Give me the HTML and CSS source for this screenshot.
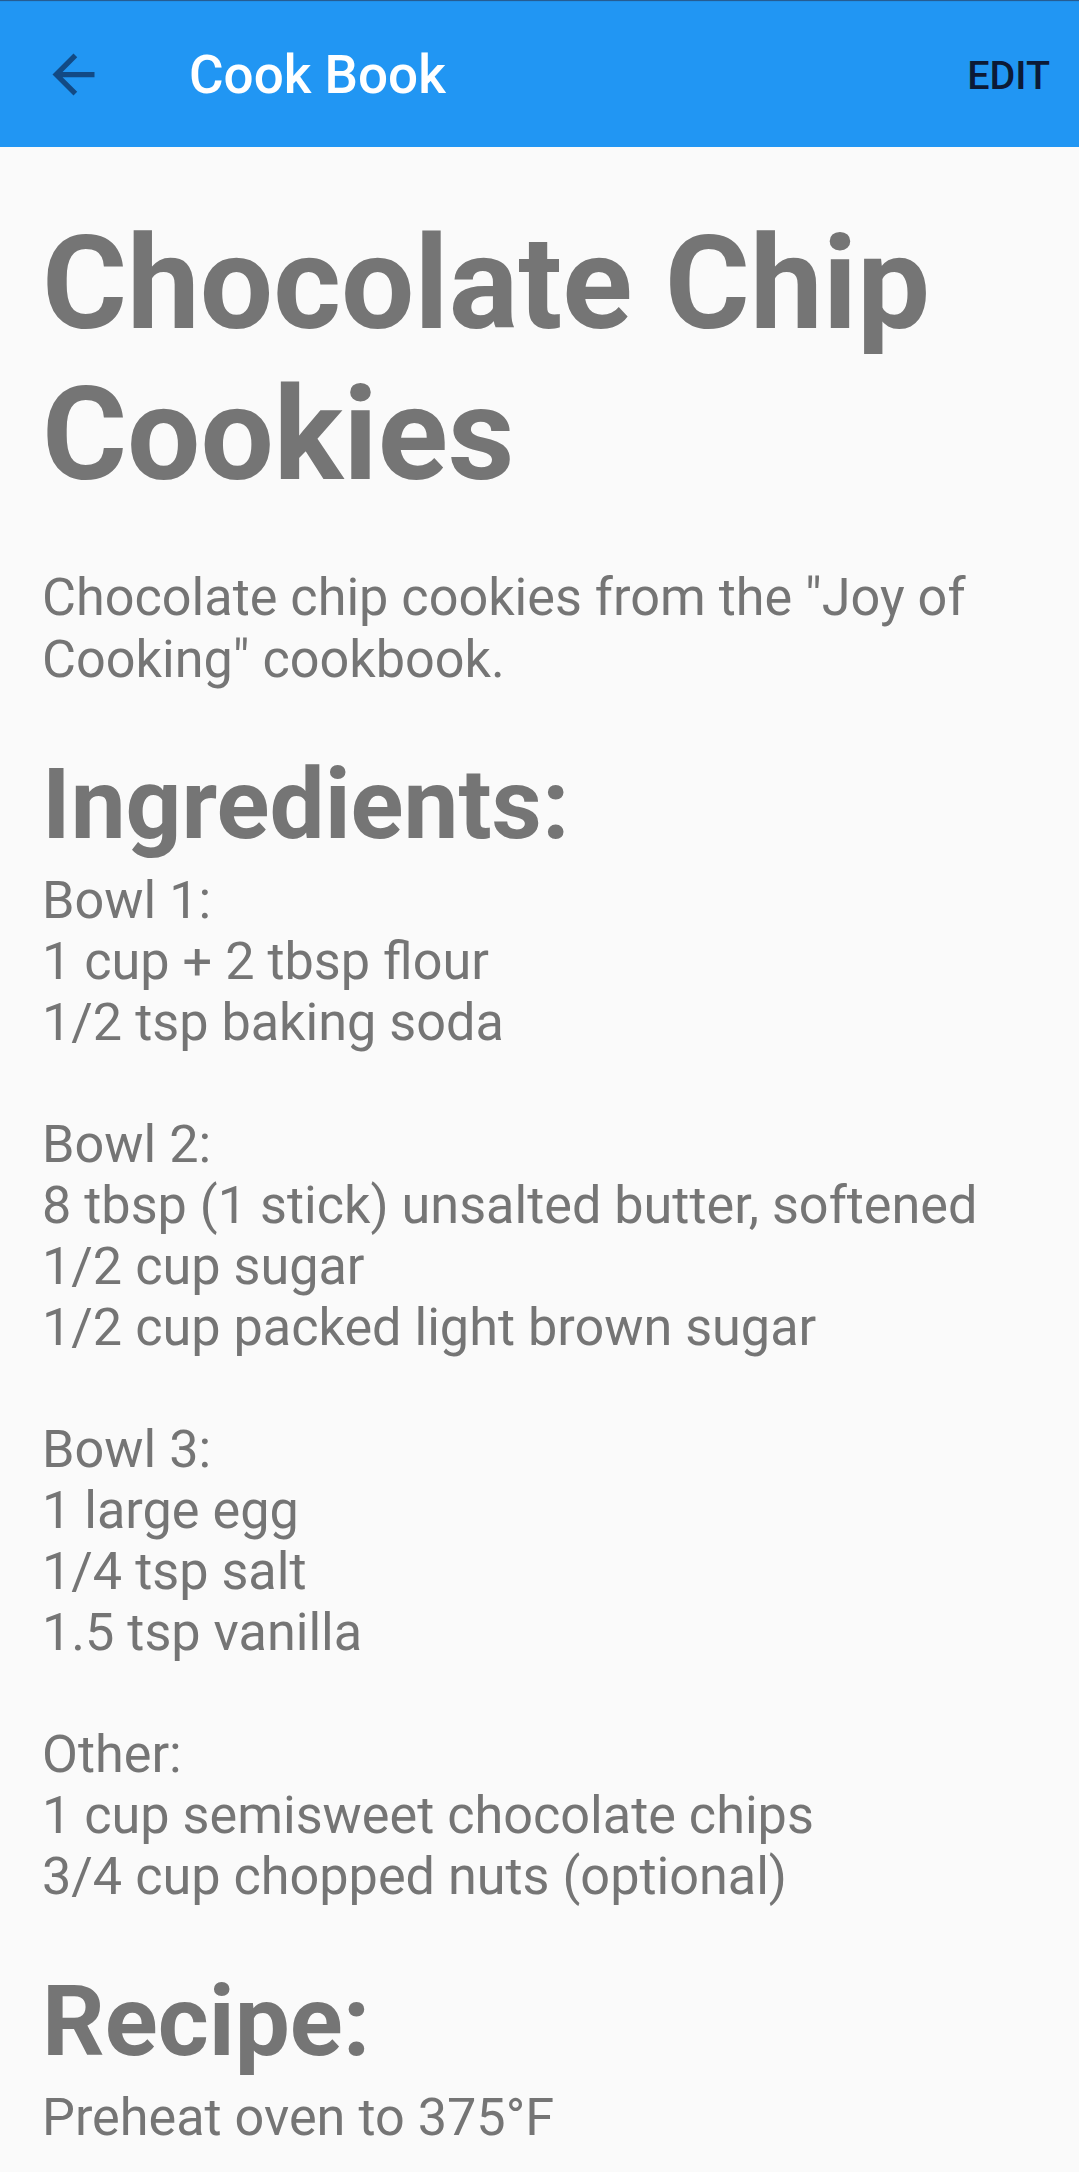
FILE: index.html
```html
<!DOCTYPE html>
<html lang="en">
<head>
<meta charset="utf-8">
<title>Cook Book</title>
<link rel="stylesheet" href="styles.css">
</head>
<body>
<header class="appbar">
  <div class="back">
    <svg viewBox="0 0 24 24" width="63" height="63" aria-hidden="true"><path d="M20 11H7.83l5.59-5.59L12 4l-8 8 8 8 1.41-1.41L7.83 13H20v-2z"/></svg>
  </div>
  <div class="bar-title">Cook Book</div>
  <div class="edit">EDIT</div>
</header>
<main class="content">
  <h1 class="title">Chocolate Chip Cookies</h1>
  <p class="desc">Chocolate chip cookies from the "Joy of Cooking" cookbook.</p>
  <h2 class="heading">Ingredients:</h2>
  <div class="list">
    <div>Bowl 1:</div>
    <div>1 cup + 2 tbsp flour</div>
    <div>1/2 tsp baking soda</div>
    <div class="blank">&nbsp;</div>
    <div>Bowl 2:</div>
    <div>8 tbsp (1 stick) unsalted butter, softened</div>
    <div>1/2 cup sugar</div>
    <div>1/2 cup packed light brown sugar</div>
    <div class="blank">&nbsp;</div>
    <div>Bowl 3:</div>
    <div>1 large egg</div>
    <div>1/4 tsp salt</div>
    <div>1.5 tsp vanilla</div>
    <div class="blank">&nbsp;</div>
    <div>Other:</div>
    <div>1 cup semisweet chocolate chips</div>
    <div>3/4 cup chopped nuts (optional)</div>
  </div>
  <h2 class="heading">Recipe:</h2>
  <div class="list">
    <div>Preheat oven to 375°F</div>
  </div>
</main>
</body>
</html>
```
FILE: styles.css
```css
html, body {
  margin: 0;
  padding: 0;
}
body {
  background: #fafafa;
  font-family: Roboto, "Liberation Sans", sans-serif;
  width: 1079px;
  height: 2172px;
  overflow: hidden;
}
.appbar {
  height: 147px;
  background: #2196f3;
  display: flex;
  align-items: center;
  box-shadow: inset 0 2px 1px -1px rgba(40, 60, 90, 0.7);
}
.back {
  width: 63px;
  height: 63px;
  margin-left: 42px;
  margin-top: 1px;
}
.back svg {
  display: block;
  fill: #124a85;
}
.bar-title {
  margin-left: 84px;
  color: #ffffff;
  font-size: 53px;
  font-weight: 500;
  line-height: 1;
  margin-top: 4px;
  flex: 1;
}
.edit {
  margin-right: 29px;
  color: #0c1a36;
  font-size: 39.5px;
  font-weight: 500;
  line-height: 1;
  margin-top: 4px;
}
.content {
  padding: 0 42px;
  color: #757575;
}
.title {
  margin: 61px 0 0;
  font-size: 130px;
  font-weight: 700;
  line-height: 151px;
}
.desc {
  margin: 57px 0 0;
  font-size: 52.2px;
  font-weight: 400;
  line-height: 61.5px;
}
.heading {
  margin: 57px 0 8px;
  font-size: 98px;
  font-weight: 700;
  line-height: 115px;
}
.list {
  font-size: 52.2px;
  font-weight: 400;
  line-height: 61px;
}
```
